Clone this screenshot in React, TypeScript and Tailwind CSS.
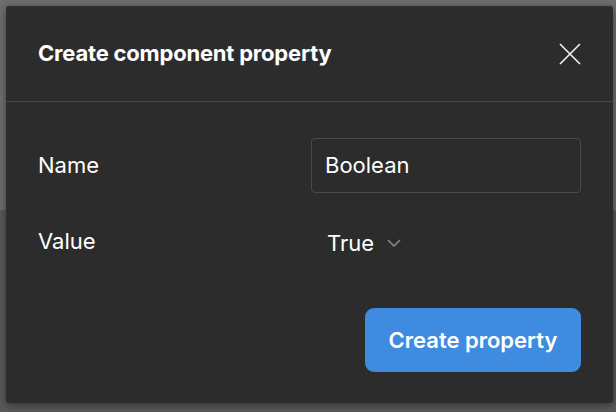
export default function App() {
  return (
    <div
      className="w-[616px] h-[412px] pl-[6px] pt-[6px] bg-[linear-gradient(to_bottom,#6e6e6e_210px,#595959_210px)]"
      style={{ fontFamily: 'Inter, "Noto Sans", sans-serif' }}
    >
      <div className="w-[607px] h-[397px] bg-[#2c2c2c] rounded-[3px] shadow-[0_2px_8px_rgba(0,0,0,0.45)] flex flex-col text-white">
        {/* Header */}
        <div className="h-[96px] px-8 flex items-center justify-between border-b border-[#464646]">
          <h2 className="text-[22px] font-bold tracking-[-0.2px]">Create component property</h2>
          <button className="w-[22px] h-[22px] flex items-center justify-center">
            <svg width="22" height="22" viewBox="0 0 22 22" fill="none">
              <path d="M1 1L21 21M21 1L1 21" stroke="#f2f2f2" strokeWidth="1.6" />
            </svg>
          </button>
        </div>

        {/* Body */}
        <div className="px-8 pt-[36px] flex flex-col">
          <div className="grid grid-cols-[273px_1fr] items-center">
            <span className="text-[22px]">Name</span>
            <div className="h-[55px] border border-[#4a4a4a] rounded-[4px] flex items-center px-[13px]">
              <span className="text-[22px]">Boolean</span>
            </div>
          </div>

          <div className="grid grid-cols-[273px_1fr] items-center mt-[30px] h-[40px]">
            <span className="text-[22px] -mt-[4px]">Value</span>
            <div className="flex items-center gap-[13px] pl-[16px]">
              <span className="text-[22px]">True</span>
              <svg width="14" height="8" viewBox="0 0 14 8" fill="none">
                <path d="M1 1L7 7L13 1" stroke="#8c8c8c" strokeWidth="1.5" />
              </svg>
            </div>
          </div>

          <div className="flex justify-end mt-[45px]">
            <button className="w-[216px] h-[64px] rounded-[9px] bg-[#3f8be0] text-white text-[22px] font-semibold">
              Create property
            </button>
          </div>
        </div>
      </div>
    </div>
  );
}
